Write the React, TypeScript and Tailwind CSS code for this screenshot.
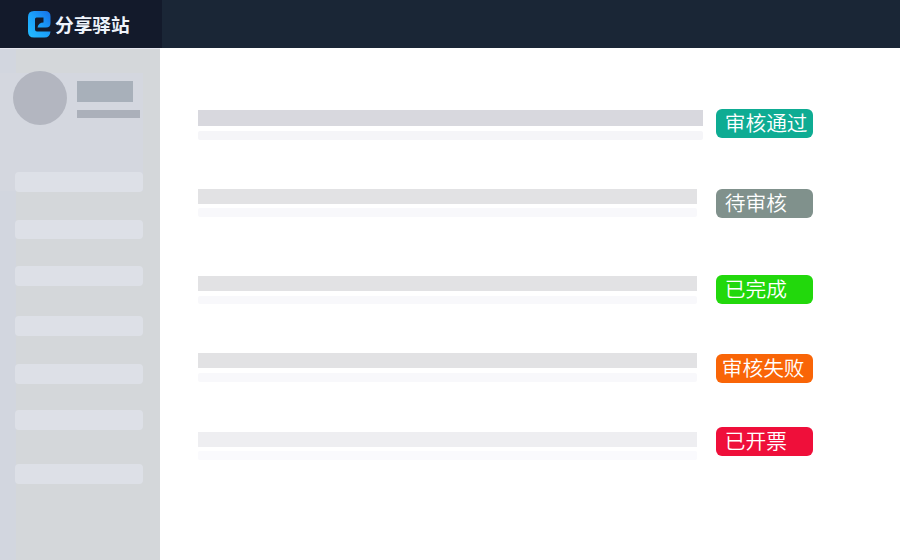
import React from 'react'

const menuItems = [
  'mt-[47px] h-5',
  'mt-7 h-[19px]',
  'mt-[27px] h-5',
  'mt-[30px] h-5',
  'mt-7 h-5',
  'mt-[26px] h-5',
  'mt-[34px] h-5',
]

const rows = [
  {
    label: '审核通过',
    row: '',
    lines: 'pt-[1px] w-[505px]',
    main: 'h-4 bg-[#d8d8de]',
    sub: 'mt-[5px] h-[9px] bg-[#f5f5f8]',
    badge: 'bg-[#0eac93] pl-[8.5px]',
  },
  {
    label: '待审核',
    row: 'mt-[51.5px]',
    lines: 'w-[499px]',
    main: 'h-[15px] bg-[#e2e2e4]',
    sub: 'mt-1 h-[9px] bg-[#f8f8fb]',
    badge: 'bg-[#80918c] pl-[8.5px]',
  },
  {
    label: '已完成',
    row: 'mt-[57.5px]',
    lines: 'pt-[1px] w-[499px]',
    main: 'h-[15px] bg-[#e2e2e4]',
    sub: 'mt-[5px] h-2 bg-[#f8f8fb]',
    badge: 'bg-[#22d80c] pl-[8.5px]',
  },
  {
    label: '审核失败',
    row: 'mt-[50.5px]',
    lines: '-mt-[1px] w-[499px]',
    main: 'h-[15px] bg-[#e2e2e4]',
    sub: 'mt-[5px] h-[9px] bg-[#f8f8fb]',
    badge: 'bg-[#f96507] pl-[5.5px]',
  },
  {
    label: '已开票',
    row: 'mt-[44.5px]',
    lines: 'pt-[4.5px] w-[499px]',
    main: 'h-[15px] bg-[#eeeef1]',
    sub: 'mt-1 h-[9px] bg-[#fafafd]',
    badge: 'bg-[#ef0f3a] pl-[8.5px]',
  },
]

function Logo() {
  return (
    <svg width="23" height="27" viewBox="0 0 23 27" fill="none">
      <defs>
        <linearGradient id="logo" x1="0" y1="22" x2="22" y2="4" gradientUnits="userSpaceOnUse">
          <stop stopColor="#22b8ff" />
          <stop offset="0.5" stopColor="#1ba0fa" />
          <stop offset="1" stopColor="#1677ea" />
        </linearGradient>
      </defs>
      <path
        d="M6 0H17Q22.500 0 22.500 5.500V12Q22.500 16.500 18 16.500H9.500Q10.500 11.500 15.500 11.500V6.500H8.500Q7 6.500 7 8V18.500Q7 20.500 9 20.500H22.500Q22 26.500 16.500 26.500H6Q0 26.500 0 20.500V6Q0 0 6 0Z"
        fill="url(#logo)"
      />
    </svg>
  )
}

export default function App() {
  return (
    <div className="flex h-[560px] w-[900px] flex-col overflow-hidden bg-white font-['Noto_Sans_CJK_SC',sans-serif]">
      <header className="flex h-12 shrink-0 bg-[#1a2636]">
        <div className="flex w-[162px] items-center bg-[#131a2b] pl-7">
          <Logo />
          <span className="ml-1 text-[18.7px] leading-none font-bold whitespace-nowrap text-[#eef3fb]">分享驿站</span>
        </div>
      </header>

      <div className="flex flex-1">
        <aside className="w-40 border-t border-[#e4e5ee] px-[15px] [background:linear-gradient(#d4d7df,#d4d7df)_0_24px/143px_118px_no-repeat,linear-gradient(to_right,#d2d6df_16px,#d4d7da_16px)]">
          <div className="-ml-[2.5px] flex pt-[21.5px]">
            <div className="size-[54.500px] shrink-0 rounded-full bg-[#b3b6c0]" />
            <div className="ml-[9.500px] pt-[10px]">
              <div className="h-[21px] w-14 bg-[#a8b0ba]" />
              <div className="mt-2 h-[8.500px] w-[63.500px] bg-[#abb0ba]" />
            </div>
          </div>
          {menuItems.map((item, i) => (
            <div key={i} className={`w-32 rounded-[4px] bg-[#dde0e7] ${item}`} />
          ))}
        </aside>

        <main className="flex-1 pt-[61px] pl-[38px]">
          {rows.map((item) => (
            <div key={item.label} className={`flex h-[28.500px] w-[615.300px] justify-between ${item.row}`}>
              <div className={item.lines}>
                <div className={item.main} />
                <div className={`rounded-[2px] ${item.sub}`} />
              </div>
              <div
                className={`w-[97px] rounded-[6px] text-[20.7px] leading-[27px] font-[350] whitespace-nowrap text-white ${item.badge}`}
              >
                {item.label}
              </div>
            </div>
          ))}
        </main>
      </div>
    </div>
  )
}
